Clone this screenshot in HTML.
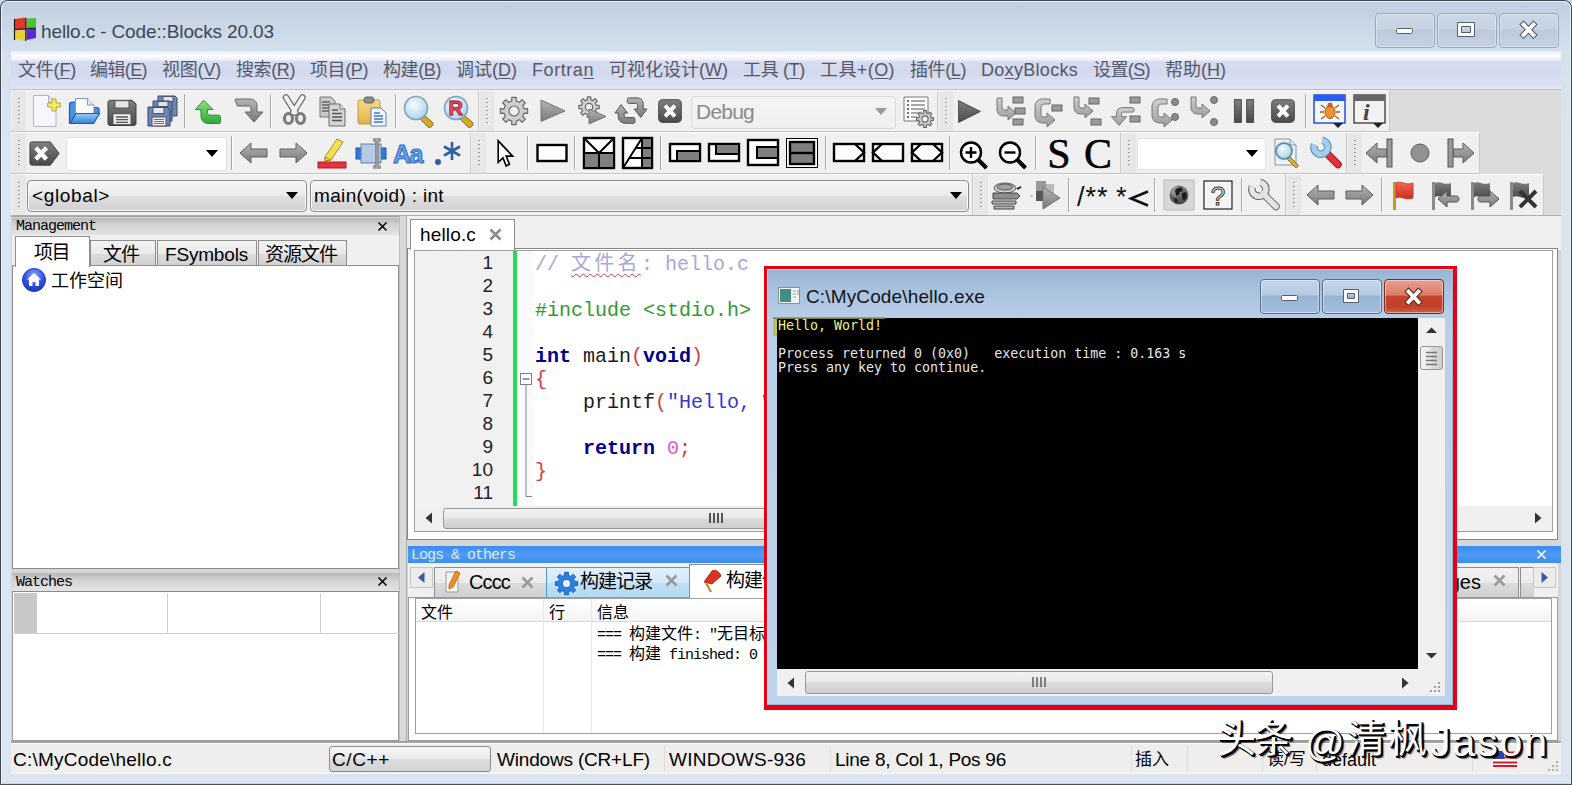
<!DOCTYPE html>
<html><head><meta charset="utf-8"><title>hello.c - Code::Blocks 20.03</title>
<style>
*{box-sizing:border-box;margin:0;padding:0}
html,body{width:1572px;height:785px;overflow:hidden}
body{position:relative;background:#c9d9ea;font-family:"Liberation Sans","Noto Sans CJK SC",sans-serif;color:#000}
.abs,.abs-all>*{position:absolute}
div,span,svg{position:absolute}
u{text-decoration-thickness:1px;text-underline-offset:2px}
#frame{left:0;top:0;width:1572px;height:785px;border:1px solid #3f4650;border-bottom:2px solid #4a525c;border-radius:8px 8px 0 0;background:linear-gradient(180deg,#bfcfe0 0,#c8d6e5 22px,#d4e0ec 50px,#dae5f1 140px,#dae5f1 100%)}
#frame2{left:1px;top:1px;width:1570px;height:783px;border:1px solid #e8f0f8;border-radius:7px 7px 0 0;border-bottom-color:#c8d6e6}
#title{left:41px;top:20px;font-size:19px;line-height:24px;color:#3c4856;white-space:nowrap}
.capbtn{top:13px;width:60px;height:35px;border:1px solid #98a9bd;border-radius:4px;background:linear-gradient(180deg,#cad7e5 0,#c6d3e2 45%,#bccbdc 50%,#c3d1e0 100%);box-shadow:inset 0 0 0 1px rgba(255,255,255,.35)}
#menubar{left:11px;top:51px;width:1550px;height:39px;background:linear-gradient(180deg,#e4eaf5 0,#fbfcfe 4px,#f3f5fb 8px,#d6dcef 11px,#d3d9ee 22px,#dde2f3 34px,#e2e6f5 100%);border-bottom:1px solid #b9bdca}
#menubar span{top:7px;font-size:18px;line-height:24px;color:#55586a;white-space:nowrap}
#tbarea{left:11px;top:90px;width:1550px;height:126px;background:#dcdcdc}
.tb{background:#f0f0f0;border-right:1px solid #c9c9c9;border-bottom:1px solid #c4c4c4;border-top:1px solid #fafafa}
.grip{width:14px;background:#e7e7e7}
.grip i{position:absolute;left:6px;top:7px;bottom:5px;width:4px;background-image:linear-gradient(180deg,#9a9a9a 0,#9a9a9a 1.5px,transparent 1.5px),linear-gradient(180deg,transparent 1px,#fff 1px,#fff 2.5px,transparent 2.5px);background-size:2px 4px,2px 4px;background-repeat:repeat-y,repeat-y;background-position:0 0,2px 0}
.sep{width:1px;background:#a8a8a8;border-right:1px solid #fdfdfd;box-sizing:content-box}
.combo{background:#fff;border:1px solid #e2e2e2;border-radius:2px}
.cbtn{border:1px solid #8e8e8e;border-radius:4px;background:linear-gradient(180deg,#f4f4f4 0,#ececec 48%,#dedede 52%,#d2d2d2 100%);box-shadow:inset 0 0 0 1px #fafafa;font-size:19px;line-height:30px;white-space:nowrap;overflow:hidden}
.darr{width:0;height:0;border-left:6px solid transparent;border-right:6px solid transparent;border-top:7px solid #000}
#main{left:11px;top:216px;width:1550px;height:527px;background:#d6d6d6}
.cap{background:linear-gradient(180deg,#b8b8b8 0,#d2d2d2 40%,#e4e4e4 100%);font-family:"Liberation Mono","Noto Sans CJK SC",monospace;font-size:15px;letter-spacing:-1px;line-height:16px;color:#000;white-space:nowrap}
.white{background:#fff}
#status{left:11px;top:743px;width:1550px;height:31px;border-bottom:1px solid #fbfbfb;background:#f0eeed;font-size:19px;line-height:30px;white-space:nowrap;border-top:1px solid #fff}
#status span{top:1px}
.code{font-family:"Liberation Mono","Noto Sans CJK SC",monospace;font-size:20px;line-height:23px;white-space:pre;left:535px;color:#1c1c1c}
.ln{font-size:19px;line-height:23px;left:430px;width:63px;text-align:right;color:#222}
.k{color:#00008c;font-weight:bold}.p{color:#d43c3c}.s{color:#3434d8}.c{color:#a8a8d6}.g{color:#349a34}.n{color:#e055cc}
.tab{font-size:19px;line-height:24px;white-space:nowrap;border:1px solid #8e8e8e;border-bottom:none;background:linear-gradient(180deg,#f2f2f2 0,#ebebeb 50%,#dcdcdc 51%,#d0d0d0 100%)}
.con{font-family:"DejaVu Sans Mono",monospace;font-size:13.3px;line-height:14px;white-space:pre;color:#e6e6e6}
.sb{background:#f0f0f0}
.thumb{border:1px solid #989898;border-radius:3px;background:linear-gradient(180deg,#f3f3f3 0,#e8e8e8 45%,#d9d9d9 55%,#cfcfcf 100%)}
.thumbv{border:1px solid #989898;border-radius:3px;background:linear-gradient(90deg,#f3f3f3 0,#e8e8e8 45%,#d9d9d9 55%,#cfcfcf 100%)}
.cbt{top:279px;width:60px;height:35px;border:1px solid #55708e;border-radius:4px;background:linear-gradient(180deg,#c4d6ea 0,#b4c9e2 45%,#98b4d4 50%,#a4bedc 100%);box-shadow:inset 0 0 0 1px rgba(255,255,255,.45)}
i{font-style:normal}
.lg{font-family:"Liberation Mono","Noto Sans CJK SC",monospace;font-size:15px;letter-spacing:-1px;line-height:20px;white-space:pre}
.lg i{font-size:16px;letter-spacing:0}
</style></head><body>

<svg width="0" height="0" style="left:0;top:0"><defs>
<linearGradient id="gg" x1="0" y1="0" x2="0" y2="1"><stop offset="0" stop-color="#b4b4b4"/><stop offset="1" stop-color="#7a7a7a"/></linearGradient>
<linearGradient id="gd" x1="0" y1="0" x2="0" y2="1"><stop offset="0" stop-color="#7e7e7e"/><stop offset="1" stop-color="#4a4a4a"/></linearGradient>
<linearGradient id="gl" x1="0" y1="0" x2="0" y2="1"><stop offset="0" stop-color="#d0d0d0"/><stop offset="1" stop-color="#9c9c9c"/></linearGradient>
<linearGradient id="gn" x1="0" y1="0" x2="0" y2="1"><stop offset="0" stop-color="#8fe07a"/><stop offset="1" stop-color="#2fa83a"/></linearGradient>
<linearGradient id="gb" x1="0" y1="0" x2="0" y2="1"><stop offset="0" stop-color="#9ccdf5"/><stop offset="1" stop-color="#2f7fd8"/></linearGradient>
<linearGradient id="gy" x1="0" y1="0" x2="0" y2="1"><stop offset="0" stop-color="#f7dd8a"/><stop offset="1" stop-color="#e0b048"/></linearGradient>
<radialGradient id="lens" cx=".4" cy=".35" r=".7"><stop offset="0" stop-color="#f4fbfe"/><stop offset="1" stop-color="#a9d3e8"/></radialGradient>
<radialGradient id="ws" cx=".5" cy=".3" r=".8"><stop offset="0" stop-color="#8ea8ff"/><stop offset=".5" stop-color="#2f55e8"/><stop offset="1" stop-color="#1228b0"/></radialGradient>
<linearGradient id="gr" x1="0" y1="0" x2="0" y2="1"><stop offset="0" stop-color="#f06a50"/><stop offset="1" stop-color="#d02a20"/></linearGradient>
</defs></svg>
<div id="frame"></div><div id="frame2"></div>
<svg viewBox="0 0 24 26" style="left:13px;top:17px;width:24px;height:26px"><path d="M1.500 2l11-1.500v11.500H1.500z" fill="#e03828"/><path d="M13.500 1.500l9.500-.5v9.500l-9.500 1z" fill="#4cc030"/><path d="M2 13.500h10.500v10l-10.500-1z" fill="#e8d030"/><path d="M13.500 12.500l9.500-1v9.500l-9.500 2z" fill="#5a28d0"/><path d="M1.500 2v21M12.800 1v23M1.500 12.700l21.500-1.500" fill="none" stroke="#201818" stroke-width="1.200"/></svg>
<div id="title" style="letter-spacing:-0.128px;">hello.c - Code::Blocks 20.03</div>
<div class="capbtn" style="left:1375px"></div>
<div class="capbtn" style="left:1437px"></div>
<div class="capbtn" style="left:1499px"></div>
<svg style="left:1395px;top:27px;width:20px;height:10px"><rect x="1.500" y="1.500" width="16" height="5" rx="1" fill="#fff" stroke="#555f6c"/></svg>
<svg style="left:1456px;top:21px;width:22px;height:18px"><path d="M1.500 1.500h17v14h-17z M5.500 5.500v6h9v-6z" fill="#fff" fill-rule="evenodd" stroke="#555f6c"/></svg>
<svg style="left:1518px;top:20px;width:24px;height:20px"><path d="M5.500 4.500l10 10.500M15.500 4.500l-10 10.500" stroke="#58606c" stroke-width="6" stroke-linecap="square"/><path d="M5.500 4.500l10 10.500M15.500 4.500l-10 10.500" stroke="#fff" stroke-width="3.800" stroke-linecap="square"/></svg>
<div id="menubar">
<span id="m0" style="letter-spacing:-0.2px;left:7px">文件(<u>F</u>)</span>
<span id="m1" style="letter-spacing:-0.603px;left:79px">编辑(<u>E</u>)</span>
<span id="m2" style="letter-spacing:-0.203px;left:151px">视图(<u>V</u>)</span>
<span id="m3" style="letter-spacing:-0.4px;left:225px">搜索(<u>R</u>)</span>
<span id="m4" style="letter-spacing:-0.403px;left:299px">项目(<u>P</u>)</span>
<span id="m5" style="letter-spacing:-0.403px;left:372px">构建(<u>B</u>)</span>
<span id="m6" style="letter-spacing:0.0px;left:445px">调试(<u>D</u>)</span>
<span id="m7" style="letter-spacing:0.567px;left:521px">Fortra<u>n</u></span>
<span id="m8" style="letter-spacing:0.0px;left:598px">可视化设计(<u>W</u>)</span>
<span id="m9" style="letter-spacing:-0.333px;left:732px">工具 (<u>T</u>)</span>
<span id="m10" style="letter-spacing:0.411px;left:809px">工具+(<u>O</u>)</span>
<span id="m11" style="letter-spacing:-0.403px;left:899px">插件(<u>L</u>)</span>
<span id="m12" style="letter-spacing:0.297px;left:970px">Do<u>x</u>yBlocks</span>
<span id="m13" style="letter-spacing:-0.603px;left:1082px">设置(<u>S</u>)</span>
<span id="m14" style="letter-spacing:0.0px;left:1154px">帮助(<u>H</u>)</span>
</div>
<div id="tbarea"></div>
<div class="tb" style="left:11px;top:90px;width:468px;height:42px;"></div>
<div class="grip" style="left:12px;top:91px;width:14px;height:40px;"><i></i></div>
<div class="tb" style="left:479px;top:90px;width:459px;height:42px;"></div>
<div class="grip" style="left:480px;top:91px;width:14px;height:40px;"><i></i></div>
<div class="tb" style="left:938px;top:90px;width:452px;height:42px;"></div>
<div class="grip" style="left:939px;top:91px;width:14px;height:40px;"><i></i></div>
<svg viewBox="0 0 32 32" style="left:29.0px;top:95.0px;width:32px;height:32px;overflow:visible"><path d="M4.500 .5h15l7.500 7.500v23.500H4.500z" fill="#f6f6fc" stroke="#b4b4c8"/><path d="M19.500 .5v7.500H27" fill="#dedeea" stroke="#b4b4c8"/><path d="M23 4h4v4h4.300v4H27v4h-4v-4h-4.300V8H23z" fill="#f2ee62" stroke="#b0a830"/></svg>
<svg viewBox="0 0 32 32" style="left:68.0px;top:95.0px;width:32px;height:32px;overflow:visible"><path d="M1.500 10c0-2 1-3 3-3h4v21h-7z" fill="#4a90e0" stroke="#1a5ab0" stroke-width="1.200"/><path d="M26 12.500h3c1.500 0 2 1 2 2V19h-5z" fill="#4a90e0" stroke="#1a5ab0" stroke-width="1.200"/><path d="M7.500 3.500h12l6.500 6.500v13H7.500z" fill="#fafcff" stroke="#8a9ab0"/><path d="M19.500 3.500V10H26" fill="#dfe5ee" stroke="#8a9ab0"/><path d="M2 28.500L8 18.500h23.500l-6 10z" fill="url(#gb)" stroke="#1a5ab0" stroke-width="1.200" stroke-linejoin="round"/></svg>
<svg viewBox="0 0 32 32" style="left:106.0px;top:95.0px;width:32px;height:32px;overflow:visible"><g transform="translate(0 3.5) scale(1 .9)"><path d="M2 4c0-1 1-2 2-2h22l4 4v22c0 1-1 2-2 2H4c-1 0-2-1-2-2z" fill="url(#gd)" stroke="#3c3c3c"/><rect x="9" y="2.5" width="14" height="8" fill="#e6e6e6" stroke="#555"/><rect x="7" y="17" width="18" height="12" fill="#ececec" stroke="#555"/><path d="M10 20.5h12M10 23.500h12M10 26.500h12" stroke="#555" stroke-width="1.6"/></g></svg>
<svg viewBox="0 0 32 32" style="left:146.0px;top:95.0px;width:32px;height:32px;overflow:visible"><path d="M12 1h17l2 2v18H12z" fill="#7088b0" stroke="#3c4c70"/><rect x="17" y="1.500" width="10" height="5" fill="#dfe3ea" stroke="#556"/><path d="M7 6h17l2 2v18H7z" fill="#6a84ae" stroke="#3c4c70"/><rect x="12" y="6.500" width="10" height="5" fill="#dfe3ea" stroke="#556"/><path d="M2 12h19l3 3v16H2z" fill="#6c86b2" stroke="#33446c"/><rect x="7" y="12.500" width="11" height="6" fill="#e6e8ee" stroke="#556"/><rect x="6" y="22" width="14" height="9" fill="#f4eef0" stroke="#556"/><path d="M8 24.500h10M8 26.500h10M8 28.500h10" stroke="#e04050" stroke-width="1.200"/></svg>
<svg viewBox="0 0 32 32" style="left:192.0px;top:95.0px;width:32px;height:32px;overflow:visible"><g transform="translate(1.500 2.500) scale(.93)"><path d="M11 3L2 13h6v6c0 6 3 9 9 9h10c2 0 2-1 2-2v-5c0-1-1-2-2-2h-9c-2 0-3-1-3-3v-3h6z" fill="url(#gn)" stroke="#1d8a2a" stroke-linejoin="round"/></g></svg>
<svg viewBox="0 0 32 32" style="left:232.0px;top:95.0px;width:32px;height:32px;overflow:visible"><g transform="translate(0 -2)"><path d="M4 6c-1 0-1 1-1 1l2 5c0 1 1 1 2 1h9c2 0 3 1 3 3v3h-6l9 10 9-10h-6v-6c0-5-3-7-8-7z" fill="url(#gg)" stroke="#666" stroke-linejoin="round"/></g></svg>
<svg viewBox="0 0 32 32" style="left:278.0px;top:95.0px;width:32px;height:32px;overflow:visible"><path d="M8 2.500l9.500 15M24.500 2.500l-9.500 15" stroke="#6a6a6a" stroke-width="6.500" stroke-linecap="round"/><path d="M8 2.500l9.500 15M24.500 2.500l-9.500 15" stroke="#f2f2f2" stroke-width="4.200" stroke-linecap="round"/><ellipse cx="10.500" cy="23.500" rx="4" ry="5" fill="#f0f0f0" stroke="#7c7c7c" stroke-width="3.200"/><ellipse cx="22.500" cy="23.500" rx="4" ry="5" fill="#f0f0f0" stroke="#7c7c7c" stroke-width="3.200"/></svg>
<svg viewBox="0 0 32 32" style="left:317.0px;top:95.0px;width:32px;height:32px;overflow:visible"><path d="M3 2h11l4 4v16H3z" fill="#c8c8c8" stroke="#777"/><path d="M5 7h8M5 10h10M5 13h10M5 16h10" stroke="#666" stroke-width="1.400"/><path d="M12 9h11l5 5v17H12z" fill="#d4d4d4" stroke="#6a6a6a"/><path d="M23 9v5h5" fill="#eee" stroke="#6a6a6a"/><path d="M15 15h6M15 18.500h10M15 22h10M15 25.500h10" stroke="#555" stroke-width="1.600"/></svg>
<svg viewBox="0 0 32 32" style="left:356.0px;top:95.0px;width:32px;height:32px;overflow:visible"><rect x="2" y="5" width="22" height="24" rx="2" fill="url(#gy)" stroke="#c09838"/><rect x="8" y="2" width="10" height="6" rx="2.500" fill="#8c8c8c" stroke="#666"/><path d="M15 13h10l5 5v13H15z" fill="#f4f8fc" stroke="#5f7fb0"/><path d="M18 18h6M18 21h9M18 24h9M18 27h9" stroke="#3878d0" stroke-width="1.500"/></svg>
<svg viewBox="0 0 32 32" style="left:403.0px;top:95.0px;width:32px;height:32px;overflow:visible"><path d="M20 19l9.500 8.500c2 2-2.500 6.500-4.500 4.500L16 22.500z" fill="#d4a828" stroke="#8a6a10"/><circle cx="13" cy="13" r="11.500" fill="url(#lens)" stroke="#7fa3b8" stroke-width="1.600"/></svg>
<svg viewBox="0 0 32 32" style="left:443.0px;top:95.0px;width:32px;height:32px;overflow:visible"><path d="M20 19l9.500 8.500c2 2-2.500 6.500-4.500 4.500L16 22.500z" fill="#d4a828" stroke="#8a6a10"/><circle cx="13" cy="13" r="11.500" fill="url(#lens)" stroke="#7fa3b8" stroke-width="1.600"/><text x="5.500" y="20" font-family="Liberation Sans,sans-serif" font-weight="bold" font-size="20" fill="#f0526a" stroke="#a01028" stroke-width=".9">R</text></svg>
<div class="sep" style="left:184px;top:94px;width:1px;height:34px;"></div>
<div class="sep" style="left:270px;top:94px;width:1px;height:34px;"></div>
<div class="sep" style="left:395px;top:94px;width:1px;height:34px;"></div>
<svg viewBox="0 0 32 32" style="left:498.0px;top:95.0px;width:32px;height:32px;overflow:visible"><path d="M29.6 13.7L29.6 18.3L26.0 18.2L24.6 21.5L27.3 24.0L24.0 27.3L21.5 24.6L18.2 26.0L18.3 29.6L13.7 29.6L13.8 26.0L10.5 24.6L8.0 27.3L4.7 24.0L7.4 21.5L6.0 18.2L2.4 18.3L2.4 13.7L6.0 13.8L7.4 10.5L4.7 8.0L8.0 4.7L10.5 7.4L13.8 6.0L13.7 2.4L18.3 2.4L18.2 6.0L21.5 7.4L24.0 4.7L27.3 8.0L24.6 10.5L26.0 13.8z" fill="#cfcfcf" stroke="#6a6a6a" stroke-width="1.200" stroke-linejoin="round"/><circle cx="16" cy="16" r="5.0" fill="#f0f0f0" stroke="#6a6a6a" stroke-width="1.200"/></svg>
<svg viewBox="0 0 32 32" style="left:536.0px;top:95.0px;width:32px;height:32px;overflow:visible"><path d="M5 5l24 11L5 26.500z" fill="url(#gg)" stroke="#777" stroke-linejoin="round"/></svg>
<svg viewBox="0 0 32 32" style="left:576.0px;top:95.0px;width:32px;height:32px;overflow:visible"><path d="M23.2 10.3L23.2 13.7L20.4 13.7L19.4 16.1L21.4 17.9L18.9 20.4L17.1 18.4L14.7 19.4L14.7 22.2L11.3 22.2L11.3 19.4L8.9 18.4L7.1 20.4L4.6 17.9L6.6 16.1L5.6 13.7L2.8 13.7L2.8 10.3L5.6 10.3L6.6 7.9L4.6 6.1L7.1 3.6L8.9 5.6L11.3 4.6L11.3 1.8L14.7 1.8L14.7 4.6L17.1 5.6L18.9 3.6L21.4 6.1L19.4 7.9L20.4 10.3z" fill="#cfcfcf" stroke="#6a6a6a" stroke-width="1.200" stroke-linejoin="round"/><circle cx="13" cy="12" r="3.7" fill="#f0f0f0" stroke="#6a6a6a" stroke-width="1.200"/><path d="M13 14l17 7.500-17 7.500z" fill="url(#gg)" stroke="#777" stroke-linejoin="round"/></svg>
<svg viewBox="0 0 32 32" style="left:615.0px;top:95.0px;width:32px;height:32px;overflow:visible"><path d="M6.200 9.600L12.500 18H9.100v2c0 1.500 1 2.500 2.500 2.500H18c1.500 0 2 .5 2 2v2c0 1.300-.5 1.800-2 1.800h-7c-5 0-7.800-2.800-7.800-7.300V18H0z" fill="url(#gg)" stroke="#555" stroke-linejoin="round"/><path d="M12.300 4.500c0-1.200.6-1.600 2-1.600H22c4 0 6.200 2.600 6.200 6.600V14H32l-6.300 8.400L19.300 14h3.200v-3.500c0-1.500-.5-2.100-2-2.100h-6.200c-1.400 0-2-.4-2-1.600z" fill="url(#gg)" stroke="#555" stroke-linejoin="round"/></svg>
<svg viewBox="0 0 32 32" style="left:657.0px;top:98.0px;width:26px;height:26px;overflow:visible"><rect x="2" y="2" width="28" height="28" rx="5" fill="url(#gd)" stroke="#3a3a3a"/><path d="M10 9.500l12 13M22 9.500l-12 13" stroke="#fff" stroke-width="5" stroke-linecap="butt"/></svg>
<div style="left:691px;top:96px;width:205px;height:33px;border:1px solid #d9d9d9;border-radius:4px;background:linear-gradient(180deg,#f4f4f4,#efefef);"></div>
<span id="dbg" style="letter-spacing:-0.778px;left:696px;top:100px;font-size:21px;line-height:24px;color:#8a8a8a">Debug</span>
<div class="darr" style="left:875px;top:108px;width:0px;height:0px;border-top-color:#9a9a9a"></div>
<svg viewBox="0 0 32 32" style="left:902.0px;top:96.0px;width:32px;height:32px;overflow:visible"><path d="M2 1h24v24H2z" fill="#fcfcfc" stroke="#7a7a7a"/><path d="M5 5h2M5 9h2M5 13h2M5 17h2M5 21h2" stroke="#444" stroke-width="1.600"/><path d="M9 5h14M9 9h14M9 13h14M9 17h8M9 21h6" stroke="#8a8a8a" stroke-width="1.400"/><path d="M31.4 21.6L31.4 24.4L29.1 24.4L28.3 26.4L29.9 27.9L27.9 29.9L26.4 28.3L24.4 29.1L24.4 31.4L21.6 31.4L21.6 29.1L19.6 28.3L18.1 29.9L16.1 27.9L17.7 26.4L16.9 24.4L14.6 24.4L14.6 21.6L16.9 21.6L17.7 19.6L16.1 18.1L18.1 16.1L19.6 17.7L21.6 16.9L21.6 14.6L24.4 14.6L24.4 16.9L26.4 17.7L27.9 16.1L29.9 18.1L28.3 19.6L29.1 21.6z" fill="#cfcfcf" stroke="#6a6a6a" stroke-width="1.200" stroke-linejoin="round"/><circle cx="23" cy="23" r="3.1" fill="#f0f0f0" stroke="#6a6a6a" stroke-width="1.200"/></svg>
<svg viewBox="0 0 32 32" style="left:955.5px;top:97.5px;width:27px;height:27px;overflow:visible"><path d="M3 3l26 13L3 29z" fill="url(#gd)" stroke="#444" stroke-linejoin="round"/></svg>
<svg viewBox="0 0 32 32" style="left:993.0px;top:95.0px;width:32px;height:32px;overflow:visible"><path d="M4 3h5v9c0 2 1 3 3 3h3v-4l8 7-8 7v-4h-4c-5 0-7-3-7-7z" fill="url(#gl)" stroke="#777" stroke-linejoin="round"/><rect x="20" y="2" width="10" height="6" fill="#9a9a9a" stroke="#666"/><rect x="22" y="13" width="10" height="6" fill="#9a9a9a" stroke="#666"/><rect x="20" y="24" width="10" height="6" fill="#9a9a9a" stroke="#666"/></svg>
<svg viewBox="0 0 32 32" style="left:1032.0px;top:95.0px;width:32px;height:32px;overflow:visible"><path d="M12 3h6v5h-5c-3 0-4 1-4 4v6c0 2 1 3 3 3h3v-4l8 7-8 7v-4h-4c-5 0-8-3-8-8v-8c0-5 3-8 8-8z" fill="url(#gl)" stroke="#777" stroke-linejoin="round" transform="translate(0 1)"/><rect x="20" y="10" width="10" height="6" fill="#9a9a9a" stroke="#666"/></svg>
<svg viewBox="0 0 32 32" style="left:1071.0px;top:95.0px;width:32px;height:32px;overflow:visible"><path d="M3 2h5v8c0 2 1 3 3 3h3V9l8 7-8 7v-4h-4c-5 0-7-3-7-7z" fill="url(#gl)" stroke="#777" stroke-linejoin="round"/><rect x="18" y="3" width="10" height="6" fill="#9a9a9a" stroke="#666"/><rect x="20" y="24" width="10" height="6" fill="#9a9a9a" stroke="#666"/></svg>
<svg viewBox="0 0 32 32" style="left:1110.0px;top:95.0px;width:32px;height:32px;overflow:visible"><path d="M22 12.600H13c-4.500 0-6.500 2.400-6.500 6.400v2.700H1.400L9 30.400l7.600-8.700h-5.100v-2.200c0-1.700.7-2.400 2.500-2.400h8c1.500 0 2-.6 2-2.100 0-1.700-.5-2.400-2-2.400z" fill="url(#gl)" stroke="#777" stroke-linejoin="round"/><rect x="20" y="2" width="10" height="6" fill="#9a9a9a" stroke="#666"/><rect x="20" y="21" width="10" height="6" fill="#9a9a9a" stroke="#666"/></svg>
<svg viewBox="0 0 32 32" style="left:1149.0px;top:95.0px;width:32px;height:32px;overflow:visible"><path d="M12 3h6v5h-5c-3 0-4 1-4 4v6c0 2 1 3 3 3h3v-4l8 7-8 7v-4h-4c-5 0-8-3-8-8v-8c0-5 3-8 8-8z" fill="url(#gl)" stroke="#777" stroke-linejoin="round" transform="translate(0 1)"/><circle cx="26" cy="7" r="3.500" fill="#8c8c8c" stroke="#666"/><circle cx="26" cy="22" r="3.500" fill="#8c8c8c" stroke="#666"/></svg>
<svg viewBox="0 0 32 32" style="left:1188.0px;top:95.0px;width:32px;height:32px;overflow:visible"><path d="M3 2h5v8c0 2 1 3 3 3h3V9l8 7-8 7v-4h-4c-5 0-7-3-7-7z" fill="url(#gl)" stroke="#777" stroke-linejoin="round"/><circle cx="26" cy="5" r="3.500" fill="#8c8c8c" stroke="#666"/><circle cx="26" cy="27" r="3.500" fill="#8c8c8c" stroke="#666"/></svg>
<svg viewBox="0 0 32 32" style="left:1230.0px;top:97.0px;width:28px;height:28px;overflow:visible"><rect x="5" y="3" width="8" height="26" fill="url(#gd)" stroke="#444"/><rect x="19" y="3" width="8" height="26" fill="url(#gd)" stroke="#444"/></svg>
<svg viewBox="0 0 32 32" style="left:1270.0px;top:98.0px;width:26px;height:26px;overflow:visible"><rect x="2" y="2" width="28" height="28" rx="5" fill="url(#gd)" stroke="#3a3a3a"/><path d="M10 9.500l12 13M22 9.500l-12 13" stroke="#fff" stroke-width="5" stroke-linecap="butt"/></svg>
<div class="sep" style="left:1305px;top:94px;width:1px;height:34px;"></div>
<svg viewBox="0 0 32 32" style="left:1313.0px;top:95.0px;width:32px;height:32px;overflow:visible"><rect x="1" y="0" width="31" height="28" fill="#f4f6fa" stroke="#2040d0" stroke-width="1.400"/><rect x="1" y="0" width="31" height="6" fill="#2a5cf0"/><ellipse cx="17" cy="17" rx="5" ry="6.500" fill="#f09030" stroke="#b05a10"/><circle cx="17" cy="10" r="2.500" fill="#c06818"/><path d="M12 13l-4-3M22 13l4-3M11 17H7M23 17h4M12 21l-4 3M22 21l4 3" stroke="#b05a10" stroke-width="1.300"/><path d="M20 28h10l-5 5z" fill="#222"/></svg>
<svg viewBox="0 0 32 32" style="left:1353.0px;top:95.0px;width:32px;height:32px;overflow:visible"><rect x="1" y="0" width="31" height="28" fill="#f2f2f2" stroke="#444" stroke-width="1.400"/><rect x="1" y="0" width="31" height="6" fill="#666"/><text x="10" y="25" font-family="Liberation Serif,serif" font-style="italic" font-weight="bold" font-size="24" fill="#444">i</text><path d="M20 28h10l-5 5z" fill="#222"/></svg>
<div class="tb" style="left:11px;top:132px;width:460px;height:42px;"></div>
<div class="grip" style="left:12px;top:133px;width:14px;height:40px;"><i></i></div>
<div class="tb" style="left:471px;top:132px;width:650px;height:42px;"></div>
<div class="grip" style="left:472px;top:133px;width:14px;height:40px;"><i></i></div>
<div class="tb" style="left:1121px;top:132px;width:226px;height:42px;"></div>
<div class="grip" style="left:1122px;top:133px;width:14px;height:40px;"><i></i></div>
<div class="tb" style="left:1347px;top:132px;width:133px;height:42px;"></div>
<div class="grip" style="left:1348px;top:133px;width:14px;height:40px;"><i></i></div>
<svg viewBox="0 0 32 32" style="left:29.0px;top:138.0px;width:31px;height:31px;overflow:visible"><path d="M3 4h19l9 12-9 12H3c-1 0-2-1-2-2V6c0-1 1-2 2-2z" fill="url(#gd)" stroke="#3a3a3a" stroke-linejoin="round"/><path d="M7 10l11 12M18 10L7 22" stroke="#fff" stroke-width="4.500"/></svg>
<div class="combo" style="left:66px;top:137px;width:161px;height:34px;"></div>
<div class="darr" style="left:206px;top:150px;width:0px;height:0px;"></div>
<div class="sep" style="left:231px;top:136px;width:1px;height:34px;"></div>
<svg viewBox="0 0 32 32" style="left:238.0px;top:137.0px;width:32px;height:32px;overflow:visible"><path d="M2 16l11-10v6h16v8H13v6z" fill="url(#gg)" stroke="#5e5e5e" stroke-linejoin="round"/></svg>
<svg viewBox="0 0 32 32" style="left:277.0px;top:137.0px;width:32px;height:32px;overflow:visible"><path d="M30 16L19 6v6H3v8h16v6z" fill="url(#gg)" stroke="#5e5e5e" stroke-linejoin="round"/></svg>
<svg viewBox="0 0 32 32" style="left:316.0px;top:137.0px;width:32px;height:32px;overflow:visible"><path d="M9 20L21 2l6 3-12 18-6 1z" fill="#f4e050" stroke="#a89020" stroke-linejoin="round"/><path d="M9 20l0 4 6-1z" fill="#e8c890" stroke="#a89020"/><rect x="2" y="25" width="28" height="6" fill="#e83040" stroke="#b01828"/></svg>
<svg viewBox="0 0 32 32" style="left:355.0px;top:137.0px;width:32px;height:32px;overflow:visible"><rect x="1" y="11" width="30" height="11" fill="#2f7ad8" stroke="#1a56a8"/><rect x="6" y="7" width="20" height="19" fill="#b4cae6" stroke="#6a7f9a"/><path d="M18 3h8M18 30h8M22 3v27" stroke="#555" stroke-width="3"/><path d="M18 3h8M18 30h8M22 3v27" stroke="#ddd" stroke-width="1"/></svg>
<svg viewBox="0 0 32 32" style="left:394.0px;top:137.0px;width:32px;height:32px;overflow:visible"><text x="-1" y="26" font-family="Liberation Sans,sans-serif" font-weight="bold" font-size="25" fill="#6aa6ea" stroke="#2f68b8" stroke-width="1" letter-spacing="-1.500">Aa</text></svg>
<svg viewBox="0 0 32 32" style="left:432.0px;top:137.0px;width:32px;height:32px;overflow:visible"><circle cx="6" cy="25" r="3" fill="#2f5fa8"/><path d="M20 5v18M12 9.500l16 9M28 9.500l-16 9" stroke="#2f5fa8" stroke-width="2.600"/></svg>
<svg viewBox="0 0 32 32" style="left:488.0px;top:137.0px;width:32px;height:32px;overflow:visible"><g transform="translate(3 2) scale(.8 .9)"><path d="M9 2v24l6-5 4 9 4-2-4-9h8z" fill="#fff" stroke="#000" stroke-width="2" stroke-linejoin="miter"/></g></svg>
<svg viewBox="0 0 32 32" style="left:536.0px;top:137.0px;width:32px;height:32px;overflow:visible"><rect x="1.500" y="8" width="29" height="16" fill="#fff" stroke="#000" stroke-width="2.400"/></svg>
<svg viewBox="0 0 32 32" style="left:583.0px;top:137.0px;width:32px;height:32px;overflow:visible"><rect x="1" y="1" width="30" height="30" fill="#fff" stroke="#000" stroke-width="2.400"/><rect x="1" y="16" width="30" height="15" fill="#7f7f7f" stroke="#000" stroke-width="2"/><path d="M1 1l15 15L31 1M16 16v15" stroke="#000" stroke-width="2" fill="none"/></svg>
<svg viewBox="0 0 32 32" style="left:622.0px;top:137.0px;width:32px;height:32px;overflow:visible"><rect x="1" y="1" width="29" height="30" fill="#fff" stroke="#000" stroke-width="2.400"/><rect x="20" y="1" width="10" height="30" fill="#7f7f7f" stroke="#000" stroke-width="2"/><path d="M1 31L20 1M20 11h10M20 21h10M14 11h6M8 21h12" stroke="#000" stroke-width="2" fill="none"/></svg>
<svg viewBox="0 0 32 32" style="left:669.0px;top:137.0px;width:32px;height:32px;overflow:visible"><rect x="1" y="7" width="30" height="17" fill="#fff" stroke="#000" stroke-width="2.400"/><rect x="8" y="14" width="23" height="10" fill="#7f7f7f" stroke="#000" stroke-width="2"/></svg>
<svg viewBox="0 0 32 32" style="left:708.0px;top:137.0px;width:32px;height:32px;overflow:visible"><rect x="1" y="7" width="30" height="17" fill="#fff" stroke="#000" stroke-width="2.400"/><rect x="8" y="7" width="23" height="10" fill="#7f7f7f" stroke="#000" stroke-width="2"/></svg>
<svg viewBox="0 0 32 32" style="left:747.0px;top:137.0px;width:32px;height:32px;overflow:visible"><rect x="1" y="3" width="30" height="25" fill="#fff" stroke="#000" stroke-width="2.400"/><rect x="10" y="10" width="21" height="11" fill="#7f7f7f" stroke="#000" stroke-width="2"/></svg>
<svg viewBox="0 0 32 32" style="left:786.0px;top:137.0px;width:32px;height:32px;overflow:visible"><rect x="0.500" y="1.500" width="31" height="29" fill="#fff" stroke="#000" stroke-width="1"/><rect x="4" y="5" width="24" height="22" fill="#7f7f7f" stroke="#000" stroke-width="2.400"/><path d="M4 16h24" stroke="#000" stroke-width="2.400"/></svg>
<svg viewBox="0 0 32 32" style="left:833.0px;top:137.0px;width:32px;height:32px;overflow:visible"><rect x="1" y="7" width="30" height="17" fill="#fff" stroke="#000" stroke-width="2.400"/><path d="M22 7l9 8.500-9 8.500" stroke="#000" stroke-width="2.400" fill="none"/></svg>
<svg viewBox="0 0 32 32" style="left:872.0px;top:137.0px;width:32px;height:32px;overflow:visible"><rect x="1" y="7" width="30" height="17" fill="#fff" stroke="#000" stroke-width="2.400"/><path d="M10 7l-9 8.500 9 8.500" stroke="#000" stroke-width="2.400" fill="none"/></svg>
<svg viewBox="0 0 32 32" style="left:911.0px;top:137.0px;width:32px;height:32px;overflow:visible"><rect x="1" y="7" width="30" height="17" fill="#fff" stroke="#000" stroke-width="2.400"/><path d="M22 7l9 8.500-9 8.500M10 7l-9 8.500 9 8.500" stroke="#000" stroke-width="2.400" fill="none"/></svg>
<svg viewBox="0 0 32 32" style="left:957.0px;top:137.0px;width:32px;height:32px;overflow:visible"><g transform="translate(1 2.500)"><circle cx="13" cy="13" r="10" fill="#fff" stroke="#000" stroke-width="2.400"/><path d="M20 20l8.500 8.500" stroke="#000" stroke-width="4"/><path d="M7.500 13h11M13 7.500v11" stroke="#000" stroke-width="2.400"/></g></svg>
<svg viewBox="0 0 32 32" style="left:996.0px;top:137.0px;width:32px;height:32px;overflow:visible"><g transform="translate(1 2.500)"><circle cx="13" cy="13" r="10" fill="#fff" stroke="#000" stroke-width="2.400"/><path d="M20 20l8.500 8.500" stroke="#000" stroke-width="4"/><path d="M7.500 13h11" stroke="#000" stroke-width="2.400"/></g></svg>
<svg viewBox="0 0 32 32" style="left:1043.0px;top:137.0px;width:32px;height:32px;overflow:visible"><text x="16" y="30.500" text-anchor="middle" font-family="Liberation Serif,serif" font-size="42" fill="#000" stroke="#000" stroke-width=".5">S</text></svg>
<svg viewBox="0 0 32 32" style="left:1082.0px;top:137.0px;width:32px;height:32px;overflow:visible"><text x="16" y="30.500" text-anchor="middle" font-family="Liberation Serif,serif" font-size="42" fill="#000" stroke="#000" stroke-width=".5">C</text></svg>
<div class="sep" style="left:527px;top:136px;width:1px;height:34px;"></div>
<div class="sep" style="left:574px;top:136px;width:1px;height:34px;"></div>
<div class="sep" style="left:660px;top:136px;width:1px;height:34px;"></div>
<div class="sep" style="left:825px;top:136px;width:1px;height:34px;"></div>
<div class="sep" style="left:949px;top:136px;width:1px;height:34px;"></div>
<div class="sep" style="left:1035px;top:136px;width:1px;height:34px;"></div>
<div class="combo" style="left:1137px;top:138px;width:129px;height:32px;"></div>
<div class="darr" style="left:1246px;top:150px;width:0px;height:0px;"></div>
<svg viewBox="0 0 32 32" style="left:1271.0px;top:137.0px;width:32px;height:32px;overflow:visible"><path d="M4 2h15l6 6v20H4z" fill="#eef2f8" stroke="#8494a8"/><path d="M19 2v6h6" fill="#dde4ee" stroke="#8494a8"/><path d="M19 20l8 8c1 1-1.500 3.500-2.500 2.500l-8-8z" fill="#d8b030" stroke="#8a6a10"/><circle cx="13" cy="14" r="8" fill="url(#lens)" stroke="#5f93b5" stroke-width="2"/></svg>
<svg viewBox="0 0 32 32" style="left:1310.0px;top:137.0px;width:32px;height:32px;overflow:visible"><path d="M16 15.500l12 12" stroke="#a01820" stroke-width="7.500" stroke-linecap="round"/><path d="M16 15.500l12 12" stroke="#e8303a" stroke-width="5.500" stroke-linecap="round"/><g transform="rotate(-28 11 10.500)"><path d="M15.500 4.800A7 7 0 1 1 6.500 4.800" fill="none" stroke="#5a8fb8" stroke-width="7.500"/><path d="M15.500 4.800A7 7 0 1 1 6.500 4.800" fill="none" stroke="#a4d0ee" stroke-width="5.500"/></g></svg>
<svg viewBox="0 0 32 32" style="left:1365.0px;top:137.0px;width:32px;height:32px;overflow:visible"><path d="M1 16l11-10v6h10v8H12v6z" fill="url(#gg)" stroke="#5e5e5e" stroke-linejoin="round"/><rect x="22" y="2" width="5" height="28" fill="#999" stroke="#555"/></svg>
<svg viewBox="0 0 32 32" style="left:1404.0px;top:137.0px;width:32px;height:32px;overflow:visible"><circle cx="16" cy="16" r="9" fill="#929292" stroke="#5e5e5e"/></svg>
<svg viewBox="0 0 32 32" style="left:1443.0px;top:137.0px;width:32px;height:32px;overflow:visible"><path d="M31 16L20 6v6H10v8h10v6z" fill="url(#gg)" stroke="#5e5e5e" stroke-linejoin="round"/><rect x="5" y="2" width="5" height="28" fill="#999" stroke="#555"/></svg>
<div class="tb" style="left:11px;top:174px;width:962px;height:42px;"></div>
<div class="grip" style="left:12px;top:175px;width:14px;height:40px;"><i></i></div>
<div class="tb" style="left:973px;top:174px;width:313px;height:42px;"></div>
<div class="grip" style="left:974px;top:175px;width:14px;height:40px;"><i></i></div>
<div class="tb" style="left:1286px;top:174px;width:258px;height:42px;"></div>
<div class="grip" style="left:1287px;top:175px;width:14px;height:40px;"><i></i></div>
<div class="cbtn" style="left:27px;top:180px;width:280px;height:32px;"><span id="cg" style="letter-spacing:0.637px;left:4px;top:0">&lt;global&gt;</span></div>
<div class="darr" style="left:286px;top:192px;width:0px;height:0px;"></div>
<div class="cbtn" style="left:310px;top:180px;width:659px;height:32px;"><span id="cm" style="letter-spacing:0.337px;left:3px;top:0">main(void) : int</span></div>
<div class="darr" style="left:950px;top:192px;width:0px;height:0px;"></div>
<svg viewBox="0 0 32 32" style="left:990.0px;top:179.0px;width:32px;height:32px;overflow:visible"><ellipse cx="15" cy="9" rx="11" ry="5" fill="#d0d0d0" stroke="#5a5a5a"/><ellipse cx="15" cy="8" rx="8" ry="3" fill="#a0a0a0" stroke="#555"/><path d="M3 14h24l3 3-3 3H3z" fill="#8e8e8e" stroke="#444"/><path d="M2 22h24v3H2zM4 27h20v3H4z" fill="#b4b4b4" stroke="#444"/><path d="M27 10l4-2" stroke="#333" stroke-width="2"/></svg>
<svg viewBox="0 0 32 32" style="left:1029.0px;top:179.0px;width:32px;height:32px;overflow:visible"><rect x="7" y="2" width="10" height="10" fill="#999"/><rect x="17" y="5" width="8" height="12" fill="#bbb"/><rect x="7" y="12" width="10" height="10" fill="#555"/><path d="M14 8l17 11-17 11z" fill="url(#gg)" stroke="#777"/><path d="M1 17h3" stroke="#999"/></svg>
<svg viewBox="0 0 32 32" style="left:1077.0px;top:179.0px;width:32px;height:32px;overflow:visible"><text x="0" y="27" font-family="Liberation Sans,sans-serif" font-size="27" letter-spacing="1" fill="#111">/**</text></svg>
<svg viewBox="0 0 32 32" style="left:1119.0px;top:179.0px;width:32px;height:32px;overflow:visible"><text x="-3" y="27" font-family="Liberation Sans,sans-serif" font-size="27" fill="#111">*</text><path d="M29 12.500L12 19.500l17 7" stroke="#111" stroke-width="2.600" fill="none"/></svg>
<svg viewBox="0 0 32 32" style="left:1163.0px;top:179.0px;width:32px;height:32px;overflow:visible"><rect x="1" y="1" width="30" height="30" fill="#d8d8d8" stroke="#b8b8b8"/><circle cx="16" cy="16" r="9.500" fill="url(#gd)"/><circle cx="13" cy="13" r="5" fill="#b0b0b0" opacity=".55"/><path d="M12 11c2-2 5-3 7-2l1 3-3 1-1 3-3 1zM19 14l4-1 1 5-3 4-2-3z" fill="#1c1c1c"/><path d="M11 19l3 1 1 4-3-1z" fill="#1c1c1c"/></svg>
<svg viewBox="0 0 32 32" style="left:1202.0px;top:179.0px;width:32px;height:32px;overflow:visible"><rect x="2" y="2" width="28" height="28" fill="#f4f4f4" stroke="#333" stroke-width="1.300"/><text x="16" y="26" text-anchor="middle" font-family="Liberation Sans,sans-serif" font-size="26" fill="#f4f4f4" stroke="#333" stroke-width="1">?</text></svg>
<svg viewBox="0 0 32 32" style="left:1248.0px;top:179.0px;width:32px;height:32px;overflow:visible"><path d="M16 15.500l12 12" stroke="#686868" stroke-width="7.500" stroke-linecap="round"/><g transform="rotate(-28 11 10.500)"><path d="M15.500 4.800A7 7 0 1 1 6.500 4.800" fill="none" stroke="#686868" stroke-width="7.500"/><path d="M15.500 4.800A7 7 0 1 1 6.500 4.800" fill="none" stroke="#e6e6e6" stroke-width="5.500"/></g><path d="M15 14.500l13 13" stroke="#e2e2e2" stroke-width="5.500" stroke-linecap="round"/></svg>
<svg viewBox="0 0 32 32" style="left:1305.0px;top:179.0px;width:32px;height:32px;overflow:visible"><path d="M2 16l11-10v6h16v8H13v6z" fill="url(#gg)" stroke="#5e5e5e" stroke-linejoin="round"/></svg>
<svg viewBox="0 0 32 32" style="left:1343.0px;top:179.0px;width:32px;height:32px;overflow:visible"><path d="M30 16L19 6v6H3v8h16v6z" fill="url(#gg)" stroke="#5e5e5e" stroke-linejoin="round"/></svg>
<svg viewBox="0 0 32 32" style="left:1388.0px;top:179.0px;width:32px;height:32px;overflow:visible"><rect x="5" y="3" width="3" height="28" fill="#c8981c"/><path d="M8 4c5-3 9 3 17 0v15c-8 3-12-3-17 0z" fill="url(#gr)" stroke="#c83028" stroke-width=".8"/></svg>
<svg viewBox="0 0 32 32" style="left:1429.0px;top:179.0px;width:32px;height:32px;overflow:visible"><rect x="3" y="3" width="3" height="28" fill="#8a8a8a"/><path d="M6 4c5-3 9 3 16 0v14c-7 3-11-3-16 0z" fill="url(#gd)"/><path d="M9 20l9-8v5h9c2 0 3 1 3 3s-1 3-3 3h-9v5z" fill="url(#gg)" stroke="#555" stroke-linejoin="round"/></svg>
<svg viewBox="0 0 32 32" style="left:1468.0px;top:179.0px;width:32px;height:32px;overflow:visible"><rect x="3" y="3" width="3" height="28" fill="#8a8a8a"/><path d="M6 4c5-3 9 3 16 0v14c-7 3-11-3-16 0z" fill="url(#gd)"/><path d="M31 20l-9-8v5h-9c-2 0-3 1-3 3s1 3 3 3h9v5z" fill="url(#gg)" stroke="#555" stroke-linejoin="round"/></svg>
<svg viewBox="0 0 32 32" style="left:1507.0px;top:179.0px;width:32px;height:32px;overflow:visible"><rect x="3" y="3" width="3" height="28" fill="#8a8a8a"/><path d="M6 4c5-3 9 3 16 0v14c-7 3-11-3-16 0z" fill="url(#gd)"/><path d="M13 12l16 16M29 12L13 28" stroke="#333" stroke-width="4"/></svg>
<div class="sep" style="left:1068px;top:178px;width:1px;height:34px;"></div>
<div class="sep" style="left:1154px;top:178px;width:1px;height:34px;"></div>
<div class="sep" style="left:1241px;top:178px;width:1px;height:34px;"></div>
<div class="sep" style="left:1381px;top:178px;width:1px;height:34px;"></div>
<div id="main"></div>
<div style="left:11px;top:215px;width:1550px;height:2px;background:linear-gradient(180deg,#b4b4b4,#9c9c9c)"></div>
<!-- Management panel -->
<div class="cap" style="left:12px;top:218px;width:387px;height:17px"><span style="left:4px;top:1px">Management</span></div>
<svg style="left:377px;top:221px;width:11px;height:11px"><path d="M1.500 1.500l8 8M9.500 1.500l-8 8" stroke="#000" stroke-width="1.600"/></svg>
<div style="left:12px;top:235px;width:387px;height:31px;background:#f0f0f0"></div>
<div class="tab" style="left:90px;top:240px;width:66px;height:26px"><span id="t1" style="letter-spacing:-1.008px;left:12px;top:2px">文件</span></div>
<div class="tab" style="left:157px;top:240px;width:100px;height:26px"><span id="t2" style="letter-spacing:-0.184px;left:7px;top:2px">FSymbols</span></div>
<div class="tab" style="left:258px;top:240px;width:89px;height:26px"><span id="t3" style="letter-spacing:-1.004px;left:6px;top:2px">资源文件</span></div>
<div class="white" style="left:12px;top:265px;width:387px;height:304px;border:1px solid #8e8e8e"></div>
<div class="tab" style="left:15px;top:236px;width:75px;height:31px;background:#fff"><span id="t0" style="letter-spacing:-1.508px;left:18px;top:4px">项目</span></div>
<svg viewBox="0 0 26 26" style="left:21px;top:267px;width:26px;height:26px"><circle cx="13" cy="13" r="11.500" fill="url(#ws)" stroke="#2a3fc0" stroke-width="1"/><path d="M13 6l-7 6.500h2V19h3.500v-4h3v4H18v-6.500h2z" fill="#fff"/></svg>
<span id="ws" style="letter-spacing:0.0px;left:51px;top:269px;font-size:18px;line-height:24px;white-space:nowrap">工作空间</span>
<!-- Watches -->
<div class="cap" style="left:12px;top:573px;width:387px;height:18px"><span style="left:4px;top:2px">Watches</span></div>
<svg style="left:377px;top:576px;width:11px;height:11px"><path d="M1.500 1.500l8 8M9.500 1.500l-8 8" stroke="#000" stroke-width="1.600"/></svg>
<div class="white" style="left:12px;top:591px;width:387px;height:150px;border:1px solid #9a9a9a;border-top-color:#8a8a8a"></div>
<div style="left:14px;top:593px;width:23px;height:40px;background:#c8c8c8"></div>
<div style="left:14px;top:633px;width:385px;height:1px;background:#d0d0d0"></div>
<div style="left:167px;top:593px;width:1px;height:40px;background:#d0d0d0"></div>
<div style="left:320px;top:593px;width:1px;height:40px;background:#d0d0d0"></div>
<!-- sash -->
<div style="left:399px;top:216px;width:8px;height:527px;background:#d9d9d9;border-left:1px solid #bdbdbd;border-right:1px solid #a8a8a8"></div>
<!-- Editor notebook -->
<div style="left:407px;top:216px;width:1154px;height:34px;background:#f0f0f0"></div>
<div class="white" style="left:407px;top:248px;width:1151px;height:292px;border:1px solid #868686"></div>
<div style="left:410px;top:219px;width:105px;height:31px;background:#fff;border:1px solid #8e8e8e;border-bottom:none"><span id="et" style="letter-spacing:0.154px;left:9px;top:3px;font-size:19px;line-height:24px">hello.c</span></div>
<svg style="left:488px;top:227px;width:16px;height:15px"><path d="M2.500 2.500l10 10M12.500 2.500l-10 10" stroke="#8a8a8a" stroke-width="2.600"/></svg>
<div style="left:414px;top:250px;width:1139px;height:282px;border:1px solid #a0a0a0;background:#fff"></div>
<div style="left:415px;top:251px;width:98px;height:255px;background:#f1f1f1"></div>
<div style="left:513px;top:251px;width:4px;height:255px;background:#22dd55"></div>
<div style="left:517px;top:251px;width:17px;height:255px;background:#fafafa"></div>
<div class="ln" style="top:251px">1<br>2<br>3<br>4<br>5<br>6<br>7<br>8<br>9<br>10<br>11</div>
<div class="code" style="top:253px"><i class="c">// <u style="text-decoration:underline wavy #d04040 1px;text-underline-offset:3px;letter-spacing:3.3px">文件名</u>: hello.c</i>

<i class="g">#include &lt;stdio.h&gt;</i>

<i class="k">int</i> main<i class="p">(</i><i class="k">void</i><i class="p">)</i>
<i class="p">{</i>
    printf<i class="p">(</i><i class="s">"Hello, World!\n"</i><i class="p">);</i>

    <i class="k">return</i> <i class="n">0</i><i class="p">;</i>
<i class="p">}</i>
</div>
<svg style="left:519px;top:372px;width:16px;height:130px"><rect x="1.500" y="1.500" width="11" height="11" fill="#fff" stroke="#808080"/><path d="M3.500 7h7" stroke="#333"/><path d="M7 13v111.500h6" fill="none" stroke="#808080"/></svg>
<!-- editor hscroll -->
<div class="sb" style="left:415px;top:506px;width:1137px;height:25px"></div>
<svg style="left:424px;top:511px;width:10px;height:14px"><path d="M8 1.500L1.500 7 8 12.500z" fill="#333"/></svg>
<div class="thumb" style="left:443px;top:508px;width:360px;height:21px"></div>
<svg style="left:708px;top:512px;width:16px;height:12px"><path d="M2 1v10M6 1v10M10 1v10M14 1v10" stroke="#555" stroke-width="2"/></svg>
<svg style="left:1533px;top:511px;width:10px;height:14px"><path d="M2 1.500L8.500 7 2 12.500z" fill="#333"/></svg>
<!-- Logs -->
<div style="left:408px;top:546px;width:1153px;height:17px;background:linear-gradient(180deg,#3a8cf0,#4f9af4 50%,#3c8eee);font-family:'Liberation Mono','Noto Sans CJK SC',monospace;font-size:15px;letter-spacing:-1px;line-height:16px;color:#d8ecff;white-space:nowrap"><span style="left:3px;top:2px">Logs &amp; others</span></div>
<svg style="left:1536px;top:549px;width:11px;height:11px"><path d="M1.500 1.500l8 8M9.500 1.500l-8 8" stroke="#fff" stroke-width="1.600"/></svg>
<div style="left:408px;top:563px;width:1150px;height:35px;background:#f0f0f0"></div>
<div style="left:408px;top:597px;width:1150px;height:144px;background:#fff;border:1px solid #9a9a9a"></div>
<div style="left:410px;top:567px;width:23px;height:21px;border:1px solid #c4c4c4;background:#ececec"></div>
<svg style="left:417px;top:571px;width:9px;height:13px"><path d="M7.500 1L1 6.500l6.500 5.500z" fill="#3a58a8"/></svg>
<div class="tab" style="left:434px;top:567px;width:113px;height:30px"><span id="l1" style="letter-spacing:-0.863px;left:34px;top:2px;font-size:20px">Cccc</span></div>
<div class="tab" style="left:546px;top:567px;width:144px;height:30px;background:linear-gradient(180deg,#dff0fb 0,#d2eaf9 50%,#bfe0f6 51%,#b4d9f2 100%);border-color:#5a9acb"><span id="l2" style="letter-spacing:-1.004px;left:33px;top:2px;font-size:19px">构建记录</span></div>
<div class="tab" style="left:689px;top:564px;width:150px;height:34px;background:#fff"><span id="l3" style="letter-spacing:-1.004px;left:36px;top:4px;font-size:19px">构建信息</span></div>
<div class="tab" style="left:1319px;top:567px;width:200px;height:30px"><span style="right:37px;top:2px;font-size:20px">Messages</span></div>
<div class="tab" style="left:1520px;top:567px;width:14px;height:30px;border-right:none"></div>
<div style="left:1533px;top:567px;width:23px;height:21px;border:1px solid #c4c4c4;background:#ececec"></div>
<svg style="left:1540px;top:571px;width:9px;height:13px"><path d="M1.500 1L8 6.500 1.500 12z" fill="#3a58a8"/></svg>
<svg style="left:520px;top:575px;width:16px;height:15px"><path d="M2.500 2.500l10 10M12.500 2.500l-10 10" stroke="#9a9a9a" stroke-width="2.600"/></svg>
<svg style="left:664px;top:573px;width:16px;height:15px"><path d="M2.500 2.500l10 10M12.500 2.500l-10 10" stroke="#9a9a9a" stroke-width="2.600"/></svg>
<svg style="left:1492px;top:573px;width:16px;height:15px"><path d="M2.500 2.500l10 10M12.500 2.500l-10 10" stroke="#9a9a9a" stroke-width="2.600"/></svg>
<svg viewBox="0 0 20 24" style="left:444px;top:570px;width:20px;height:24px"><path d="M2 2h12v20H2z" fill="#f4f4f4" stroke="#999"/><path d="M12 1l4 2-7 14-4 2 0-4z" fill="#f09020" stroke="#b06010" stroke-width=".8"/></svg>
<svg viewBox="0 0 32 32" style="left:554px;top:571px;width:25px;height:25px"><path d="M30.3 13.5L30.3 18.5L26.5 18.3L25.1 21.7L27.8 24.4L24.4 27.8L21.7 25.1L18.3 26.5L18.5 30.3L13.5 30.3L13.7 26.5L10.3 25.1L7.6 27.8L4.2 24.4L6.9 21.7L5.5 18.3L1.7 18.5L1.7 13.5L5.5 13.7L6.9 10.3L4.2 7.6L7.6 4.2L10.3 6.9L13.7 5.5L13.5 1.7L18.5 1.7L18.3 5.5L21.7 6.9L24.4 4.2L27.8 7.6L25.1 10.3L26.5 13.7z" fill="#2f7fe0" stroke="#1a5ab8" stroke-width="1.200" stroke-linejoin="round"/><circle cx="16" cy="16" r="5.2" fill="#e4f0fb" stroke="#1a5ab8" stroke-width="1.200"/></svg>
<svg viewBox="0 0 24 26" style="left:700px;top:568px;width:24px;height:26px"><path d="M4 14l8-11c3-2 8 1 9 5l-9 8z" fill="#e03020" stroke="#a01810" stroke-width=".8"/><path d="M6 15l5 9" stroke="#c09030" stroke-width="2.400"/></svg>
<!-- log list -->
<div style="left:415px;top:598px;width:1137px;height:136px;border:1px solid #a0a0a0;background:#fff"></div>
<div style="left:416px;top:599px;width:1135px;height:23px;background:linear-gradient(180deg,#fff,#f4f4f4);border-bottom:1px solid #d8d8d8"></div>
<div style="left:543px;top:599px;width:1px;height:134px;background:#e8e8e8"></div>
<div style="left:591px;top:599px;width:1px;height:134px;background:#e8e8e8"></div>
<span id="h1" style="letter-spacing:-0.008px;left:421px;top:602px;font-size:16px;line-height:22px">文件</span>
<span style="left:549px;top:602px;font-size:16px;line-height:22px">行</span>
<span id="h3" style="letter-spacing:-0.008px;left:597px;top:602px;font-size:16px;line-height:22px">信息</span>
<span class="lg" style="left:597px;top:625px">=== <i>构建文件</i>: "<i>无目标</i>" <i>在</i> "<i>无项目</i>" <i>中</i> (<i>编译器</i>: <i>未知的</i>) ===</span>
<span class="lg" style="left:597px;top:645px">=== <i>构建</i> finished: 0 error(s), 0 warning(s) (0 minute(s), 0 second(s)) ===</span>
<div style="left:11px;top:741px;width:1550px;height:2px;background:#a2a2a2"></div>
<!-- status bar -->
<div id="status">
<span id="s0" style="letter-spacing:0.222px;left:2px">C:\MyCode\hello.c</span>
<div style="left:318px;top:2px;width:162px;height:26px;border:1px solid #8c8c8c;border-radius:3px;background:linear-gradient(180deg,#f6f6f6,#e9e9e9 50%,#dcdcdc 52%,#d4d4d4)"><span id="s1" style="letter-spacing:0.616px;left:2px;top:-2px">C/C++</span></div>
<span id="s2" style="letter-spacing:-0.182px;left:486px">Windows (CR+LF)</span>
<span id="s3" style="letter-spacing:0.266px;left:658px">WINDOWS-936</span>
<span id="s4" style="letter-spacing:-0.257px;left:824px">Line 8, Col 1, Pos 96</span>
<span style="left:1124px;font-size:17px">插入</span>
<span style="left:1256px;font-size:17px">读/写</span>
<span style="left:1311px;font-size:18px">default</span>
</div>
<div style="left:664px;top:746px;width:1px;height:25px;background:#dcdcdc"></div>
<div style="left:830px;top:746px;width:1px;height:25px;background:#dcdcdc"></div>
<div style="left:1131px;top:746px;width:1px;height:25px;background:#dcdcdc"></div>
<div style="left:1187px;top:746px;width:1px;height:25px;background:#dcdcdc"></div>
<div style="left:1262px;top:746px;width:1px;height:25px;background:#dcdcdc"></div>
<div style="left:1316px;top:746px;width:1px;height:25px;background:#dcdcdc"></div>
<div style="left:1472px;top:746px;width:1px;height:25px;background:#dcdcdc"></div>
<svg style="left:1493px;top:751px;width:24px;height:16px"><rect width="24" height="16" fill="#fff"/><path d="M0 1.500h24M0 6.500h24M0 11.500h24M0 15h24" stroke="#d81828" stroke-width="2.200"/><rect width="11" height="8" fill="#2848a8"/></svg>
<svg style="left:1546px;top:759px;width:14px;height:14px"><path d="M11 2v2M7 6v2M11 6v2M3 10v2M7 10v2M11 10v2" stroke="#b0b0b0" stroke-width="2"/></svg>
<!-- console -->
<div style="left:764px;top:266px;width:693px;height:444px;background:#e60012"></div>
<div style="left:767px;top:269px;width:686px;height:436px;background:linear-gradient(180deg,#98b4d4 0,#a9c2de 22px,#b9cfe8 50px,#bdd3ec 100%)"></div>
<div style="left:767px;top:269px;width:686px;height:436px;border:1px solid #d6e4f4;border-right-color:#9ab4d2;border-bottom-color:#9ab4d2"></div>
<svg viewBox="0 0 22 17" style="left:778px;top:287px;width:22px;height:17px"><rect x=".5" y=".5" width="21" height="16" fill="#f4f4f0" stroke="#8a9098"/><rect x="2" y="2" width="11" height="13" fill="#3f8f86"/><path d="M15 4h3M15 7h3M15 10h3M20 3v5" stroke="#9aa" stroke-width="1.200"/></svg>
<span id="ct" style="letter-spacing:0.138px;left:806px;top:285px;font-size:19px;line-height:24px;white-space:nowrap;color:#101418">C:\MyCode\hello.exe</span>
<div class="cbt" style="left:1260px"></div><div class="cbt" style="left:1322px"></div>
<div class="cbt" style="left:1384px;background:linear-gradient(180deg,#e8a090 0,#dc7c68 45%,#c8442c 50%,#c0402a 80%,#d06048 100%);border-color:#7a2a20"></div>
<svg style="left:1280px;top:294px;width:20px;height:10px"><rect x="1.500" y="1.500" width="16" height="5" rx="1" fill="#fff" stroke="#55606e"/></svg>
<svg style="left:1342px;top:288px;width:20px;height:18px"><path d="M1.500 1.500h15v13h-15z M5.500 5.500v5h7v-5z" fill="#fff" fill-rule="evenodd" stroke="#55606e"/></svg>
<svg style="left:1403px;top:287px;width:24px;height:20px"><path d="M5.500 4.500l10 10.500M15.500 4.500l-10 10.500" stroke="#5a2820" stroke-width="6" stroke-linecap="square"/><path d="M5.500 4.500l10 10.500M15.500 4.500l-10 10.500" stroke="#fff" stroke-width="3.800" stroke-linecap="square"/></svg>
<div style="left:777px;top:318px;width:641px;height:351px;background:#000"></div>
<div style="left:773px;top:317px;width:4px;height:19px;background:#c6be4e"></div><div style="left:773px;top:317px;width:112px;height:2px;background:linear-gradient(180deg,#b8b25a,#6a6a28)"></div>
<div class="con" style="left:778px;top:319px"><i style="color:#f2f27e">Hello, World!</i>

Process returned 0 (0x0)   execution time : 0.163 s
Press any key to continue.</div>
<div class="sb" style="left:1418px;top:318px;width:27px;height:351px"></div>
<svg style="left:1425px;top:326px;width:13px;height:8px"><path d="M1 7l5.500-5.500L12 7z" fill="#333"/></svg>
<div class="thumbv" style="left:1420px;top:346px;width:23px;height:24px"></div>
<svg style="left:1425px;top:350px;width:13px;height:16px"><path d="M1 2.500h11M1 6.500h11M1 10.500h11M1 14.500h11" stroke="#777" stroke-width="1.600"/></svg>
<svg style="left:1425px;top:652px;width:13px;height:8px"><path d="M1 1l5.500 5.500L12 1z" fill="#333"/></svg>
<div class="sb" style="left:777px;top:669px;width:668px;height:27px"></div>
<svg style="left:786px;top:676px;width:10px;height:14px"><path d="M8 1.500L1.500 7 8 12.500z" fill="#333"/></svg>
<div class="thumb" style="left:805px;top:671px;width:468px;height:23px"></div>
<svg style="left:1031px;top:676px;width:16px;height:12px"><path d="M2 1v10M6 1v10M10 1v10M14 1v10" stroke="#666" stroke-width="1.600"/></svg>
<svg style="left:1400px;top:676px;width:10px;height:14px"><path d="M2 1.500L8.500 7 2 12.500z" fill="#333"/></svg>
<svg style="left:1428px;top:680px;width:14px;height:14px"><path d="M11 2v2M7 6v2M11 6v2M3 10v2M7 10v2M11 10v2" stroke="#a0a0a0" stroke-width="2"/></svg>
<!-- watermark -->
<div id="wmk" style="left:0;top:0;width:0;height:0;color:#fff;white-space:nowrap;text-shadow:2px 2px 0 #000,1px 2px 0 #000,2px 1px 0 #000,1px 1px 0 #000,3px 3px 1px rgba(0,0,0,.55)"><span id="wa" style="letter-spacing:-2.008px;left:1217px;top:714px;font-size:39px;line-height:50px;">头条</span><span id="wb" style="letter-spacing:1.406px;left:1305px;top:718px;font-size:39px;line-height:50px;font-family:'Liberation Sans',sans-serif">@</span><span id="wc" style="letter-spacing:1.992px;left:1347px;top:714px;font-size:39px;line-height:50px;">清枫</span><span id="wd" style="letter-spacing:1.916px;left:1430px;top:717px;font-size:41px;line-height:50px;font-family:'Liberation Sans',sans-serif">Jason</span></div>

</body></html>
